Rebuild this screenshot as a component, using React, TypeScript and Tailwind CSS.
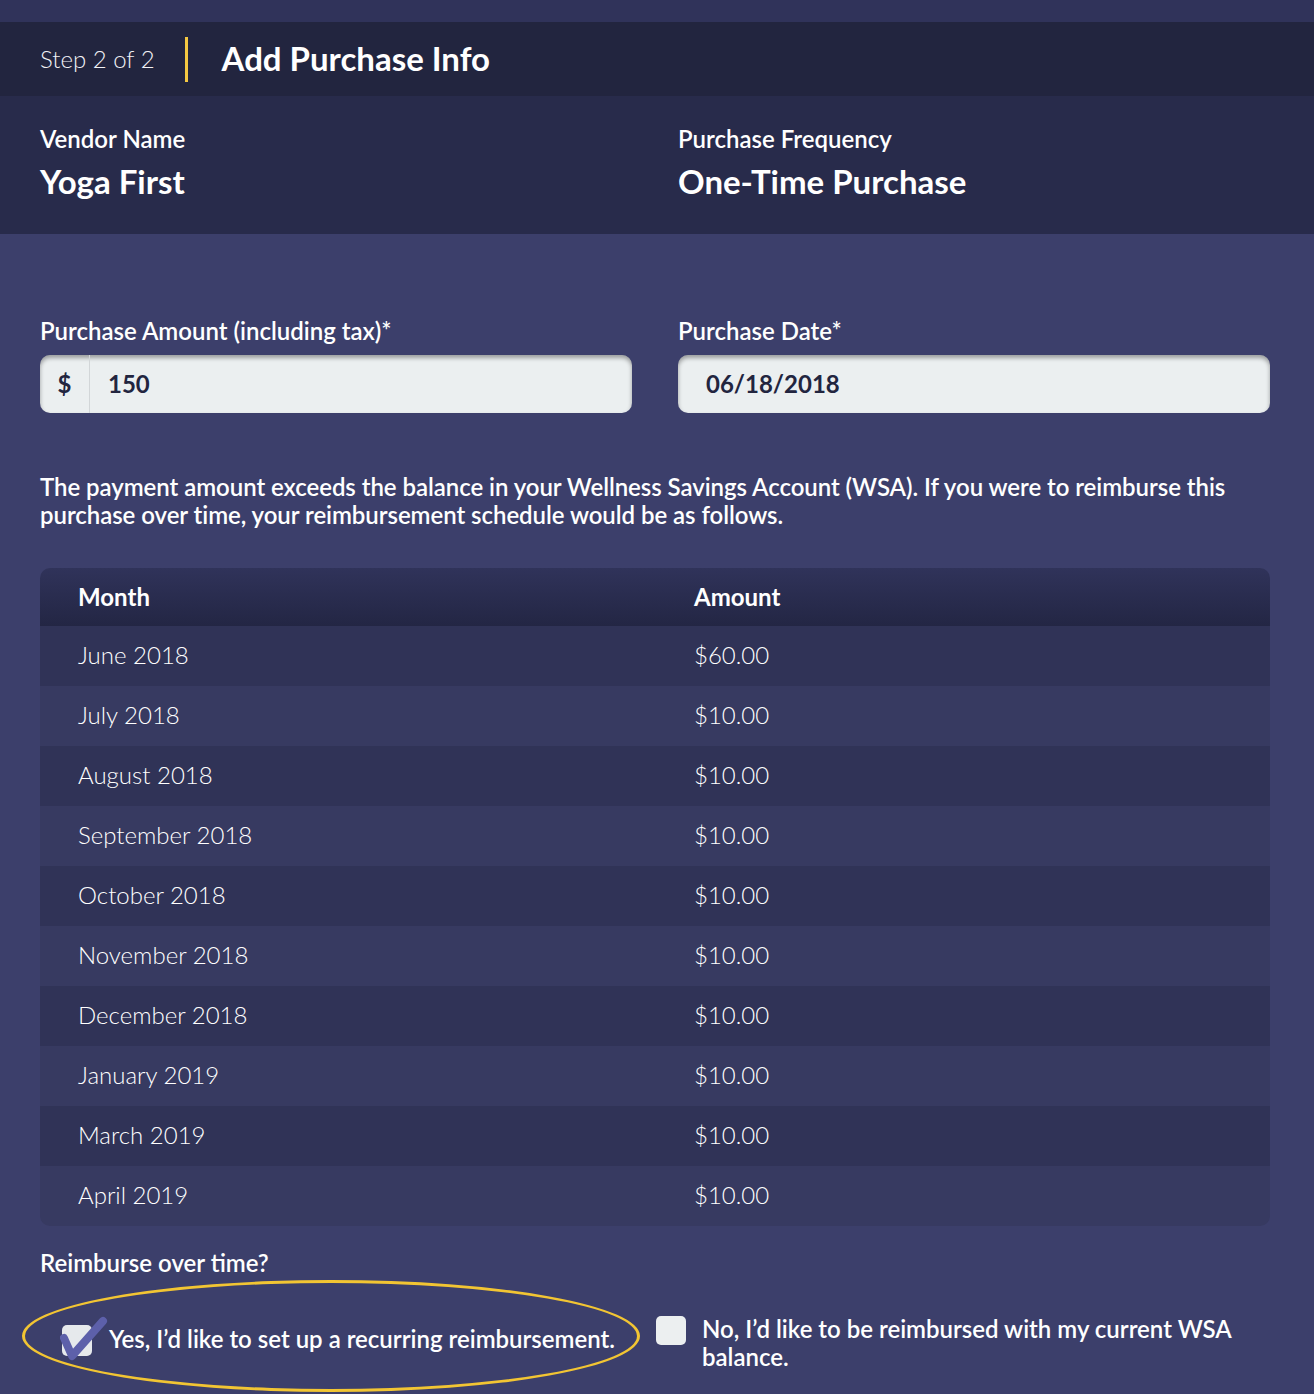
import React from "react";

const rows = [
  ["June 2018", "$60.00"],
  ["July 2018", "$10.00"],
  ["August 2018", "$10.00"],
  ["September 2018", "$10.00"],
  ["October 2018", "$10.00"],
  ["November 2018", "$10.00"],
  ["December 2018", "$10.00"],
  ["January 2019", "$10.00"],
  ["March 2019", "$10.00"],
  ["April 2019", "$10.00"],
];

const CheckMark = () => (
  <svg className="absolute -left-[2px] -top-[10px] w-[48px] h-[46px]" viewBox="0 0 48 46" fill="none">
    <path d="M4 23 L12 41 L43 6" stroke="#5d60aa" strokeWidth={8} strokeLinecap="round" strokeLinejoin="round" />
  </svg>
);

export default function App() {
  return (
    <div className="w-[1314px] min-h-[1394px] bg-[#3c3f6b] text-white font-['Lato','Noto_Sans',sans-serif]">
      <div className="h-[22px] bg-[#30335a]" />
      <header className="h-[74px] bg-[#22253f] flex items-center pl-10">
        <span className="text-[24px] font-light text-[#f2f2f6]">Step 2 of 2</span>
        <span className="ml-[30px] w-[3px] h-[45px] bg-[#f5c842]" />
        <h1 className="ml-[34px] text-[33px] font-bold">Add Purchase Info</h1>
      </header>

      <section className="h-[138px] bg-[#282b4b] grid grid-cols-2 gap-[46px] pl-10 pr-[44px] pt-[27px]">
        <div>
          <div className="text-[24px] font-semibold leading-[32px]">Vendor Name</div>
          <div className="text-[33px] font-bold leading-[44px] mt-[4px]">Yoga First</div>
        </div>
        <div>
          <div className="text-[24px] font-semibold leading-[32px]">Purchase Frequency</div>
          <div className="text-[33px] font-bold leading-[44px] mt-[4px]">One-Time Purchase</div>
        </div>
      </section>

      <main className="pl-10 pr-[44px]">
        <div className="grid grid-cols-2 gap-[46px] pt-[81px]">
          <div>
            <label className="block text-[24px] font-semibold leading-[32px]">Purchase Amount (including tax)*</label>
            <div className="mt-[8px] h-[58px] rounded-[10px] bg-[#ebeff0] shadow-[inset_0_3px_4px_rgba(0,0,0,0.35)] flex items-stretch text-[#22253f]">
              <span className="w-[50px] flex items-center justify-center border-r border-[#d2d6d8] text-[24px] font-bold">$</span>
              <span className="pl-[18px] flex items-center text-[24px] font-bold">150</span>
            </div>
          </div>
          <div>
            <label className="block text-[24px] font-semibold leading-[32px]">Purchase Date*</label>
            <div className="mt-[8px] h-[58px] rounded-[10px] bg-[#ebeff0] shadow-[inset_0_3px_4px_rgba(0,0,0,0.35)] flex items-center pl-[28px] text-[24px] font-bold text-[#22253f]">
              06/18/2018
            </div>
          </div>
        </div>

        <p className="mt-[60px] text-[24px] font-semibold leading-[28px] tracking-[-0.05px]">
          The payment amount exceeds the balance in your Wellness Savings Account (WSA). If you were to reimburse this purchase over time, your reimbursement schedule would be as follows.
        </p>

        <div className="mt-[39px] rounded-[10px] overflow-hidden">
          <div className="h-[58px] bg-gradient-to-b from-[#30335a] to-[#232644] grid grid-cols-[616px_1fr] items-center px-[38px] text-[24px] font-bold">
            <span>Month</span>
            <span>Amount</span>
          </div>
          {rows.map(([m, a], i) => (
            <div
              key={m}
              className={`h-[60px] grid grid-cols-[616px_1fr] items-center px-[38px] pb-[2px] text-[24px] font-light ${
                i % 2 === 0 ? "bg-[#303357]" : "bg-[#373a61]"
              }`}
            >
              <span>{m}</span>
              <span>{a}</span>
            </div>
          ))}
        </div>

        <div className="mt-[21px] text-[24px] font-semibold leading-[32px]">Reimburse over time?</div>

        <div className="relative flex mt-[24px]">
          <div className="absolute left-[-18px] top-[-23px] w-[618px] h-[112px] rounded-[50%] border-[3px] border-[#f2c533] pointer-events-none" />
          <div className="w-[616px] flex items-start pl-[22px] pt-[21px]">
            <span className="relative mt-[1px] w-[30px] h-[31px] rounded-[5px] bg-[#e6e9ec] shrink-0">
              <CheckMark />
            </span>
            <span className="ml-[17px] text-[24px] font-semibold leading-[30px]">Yes, I’d like to set up a recurring reimbursement.</span>
          </div>
          <div className="flex-1 flex items-start pt-[12px]">
            <span className="mt-[1px] w-[30px] h-[29px] rounded-[5px] bg-[#eceff0] shrink-0" />
            <span className="ml-[16px] text-[24px] font-semibold leading-[28px]">No, I’d like to be reimbursed with my current WSA balance.</span>
          </div>
        </div>
      </main>
    </div>
  );
}
